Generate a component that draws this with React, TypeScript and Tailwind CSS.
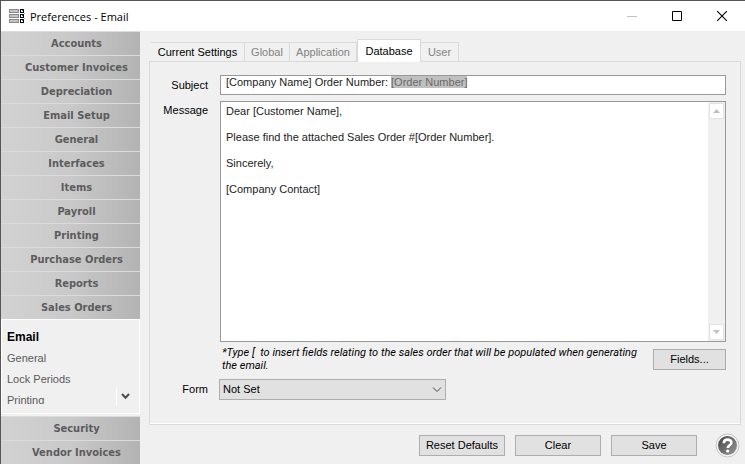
import { useEffect, useRef, useState } from "react";

const TOP_SECTIONS = [
  "Accounts",
  "Customer Invoices",
  "Depreciation",
  "Email Setup",
  "General",
  "Interfaces",
  "Items",
  "Payroll",
  "Printing",
  "Purchase Orders",
  "Reports",
  "Sales Orders",
];
const BOTTOM_SECTIONS = ["Security", "Vendor Invoices"];
const PAGES = ["Email", "General", "Lock Periods", "Printing"];

function SectionButton({ name }: { name: string }) {
  return (
    <button className="h-6 w-full shrink-0 border-t border-[#dcdcdc] bg-linear-to-r from-[#d2d2d2] via-[#c9c9c9] to-[#b3b3b3] pl-3 text-center font-['DejaVu_Sans_Condensed','DejaVu_Sans',sans-serif] text-[11px] leading-[23px] font-bold text-[#5c5c5c]">
      {name}
    </button>
  );
}

function Sidebar() {
  return (
    <nav className="flex w-[139px] shrink-0 flex-col">
      {TOP_SECTIONS.map((name) => (
        <SectionButton key={name} name={name} />
      ))}
      <div className="relative mb-[2px] h-[95px] shrink-0 overflow-hidden border border-white bg-[#f0f0f0] pt-2 pl-[5px]">
        <div className="flex h-[76px] flex-col overflow-hidden">
          {PAGES.map((page) => (
            <a
              key={page}
              href="#"
              className={
                page === "Email"
                  ? "h-[21px] shrink-0 text-[12px] leading-[18px] font-bold text-black"
                  : "h-[21px] shrink-0 leading-[18px] text-[#5a5a5a]"
              }
            >
              {page}
            </a>
          ))}
        </div>
        <button
          aria-label="Scroll down"
          className="absolute right-[5px] bottom-2 flex h-[17px] w-[18px] items-center justify-center border-l border-white"
        >
          <svg width="9" height="7" viewBox="0 0 9 7" fill="none" stroke="#4a4a4a" strokeWidth="2">
            <path d="M1 1l3.5 3.8L8 1" />
          </svg>
        </button>
      </div>
      {BOTTOM_SECTIONS.map((name) => (
        <SectionButton key={name} name={name} />
      ))}
    </nav>
  );
}

function TitleBar() {
  return (
    <header className="flex h-[30px] shrink-0 items-center bg-white pl-2">
      <svg width="16" height="15" viewBox="0 0 16 15">
        {[0, 5, 10].map((y) => (
          <g key={y}>
            <rect x="0.5" y={y + 0.5} width="9" height="3" fill="#c4c4c4" stroke="#8a8a8a" />
            <rect x="11.5" y={y + 0.5} width="3" height="3" fill="#fff" stroke="#000" />
            <path d={`M13 ${y + 2}l2.5 -2.5`} stroke="#333" strokeWidth="0.8" />
          </g>
        ))}
      </svg>
      <h1 className="ml-[5px] flex-1 font-['Open_Sans',sans-serif] text-[11px] text-black">Preferences - Email</h1>
      <button aria-label="Minimize" className="flex h-full w-[46px] items-center justify-center">
        <svg width="10" height="10" stroke="#c4c4c4">
          <path d="M0 5.5h10" />
        </svg>
      </button>
      <button aria-label="Maximize" className="flex h-full w-[44px] items-center justify-center">
        <svg width="10" height="10" stroke="#000" fill="none">
          <path d="M0.5 0.5h9v9h-9z" />
        </svg>
      </button>
      <button aria-label="Close" className="flex h-full w-[46px] items-center justify-center">
        <svg width="10" height="10" stroke="#000" strokeWidth="1.1">
          <path d="M0 0l10 10M10 0L0 10" />
        </svg>
      </button>
    </header>
  );
}

const tabBase = "h-[19px] border-t border-r border-[#d9d9d9] bg-[#f0f0f0]";

function Tabs() {
  return (
    <div role="tablist" className="ml-[2px] flex items-end">
      <button role="tab" className={`${tabBase} w-[94px] text-black`}>Current Settings</button>
      <button role="tab" className={`${tabBase} w-[45px] text-[#838383]`}>Global</button>
      <button role="tab" className={`${tabBase} w-[67px] text-[#838383]`}>Application</button>
      <button role="tab" aria-selected className="relative -mb-px h-[23px] w-[64px] border border-b-0 border-[#d9d9d9] bg-white text-black">
        Database
      </button>
      <button role="tab" className={`${tabBase} w-[38px] text-[#838383]`}>User</button>
    </div>
  );
}

function ScrollArrow({ up }: { up?: boolean }) {
  return (
    <button
      type="button"
      aria-label={up ? "Scroll up" : "Scroll down"}
      className="flex h-4 w-[15px] items-center justify-center border border-[#e3e3e3] bg-white"
    >
      <svg width="7" height="4" viewBox="0 0 7 4" fill="#c0c0c0">
        <path d={up ? "M0 4L3.5 0L7 4z" : "M0 0L3.5 4L7 0z"} />
      </svg>
    </button>
  );
}

const buttonStyle = "h-[21px] border border-[#adadad] bg-[#e1e1e1] text-black";

export default function App() {
  const subjectRef = useRef<HTMLInputElement>(null);
  const [subject, setSubject] = useState("[Company Name] Order Number: [Order Number]");
  const [message, setMessage] = useState(
    "Dear [Customer Name],\n\nPlease find the attached Sales Order #[Order Number].\n\nSincerely,\n\n[Company Contact]"
  );

  // start with the last field selected
  useEffect(() => {
    const input = subjectRef.current;
    input?.focus();
    input?.setSelectionRange(subject.lastIndexOf("["), subject.length);
  }, []);

  return (
    <div className="flex min-h-screen flex-col border-t border-l border-[#555] bg-[#f0f0f0] font-['Liberation_Sans',Arial,sans-serif] text-[11px] leading-[13px]">
      <TitleBar />
      <div className="flex flex-1">
        <Sidebar />
        <main className="flex min-w-0 flex-1 flex-col pt-2 pr-1 pl-[9px]">
          <Tabs />
          <form className="flex flex-1 flex-col border border-[#d9d9d9] pt-[13px] pr-[14px] pb-6 shadow-[inset_0_-1px_0_#fff]">
            <div className="flex">
              <label htmlFor="subject" className="w-[70px] shrink-0 pt-[4px] pr-[12px] text-right">Subject</label>
              <input
                id="subject"
                ref={subjectRef}
                value={subject}
                onChange={(e) => setSubject(e.target.value)}
                className="h-5 min-w-0 flex-1 border border-[#999] bg-white px-[5px] pb-[6px] text-[#1c1c1c] outline-none selection:bg-[#c0c0c0] selection:text-[#6a6a6a]"
              />
            </div>
            <div className="mt-[6px] flex flex-1">
              <label htmlFor="message" className="w-[70px] shrink-0 pt-[3px] pr-[12px] text-right">Message</label>
              <div className="flex min-w-0 flex-1 border border-[#999] bg-white">
                <textarea
                  id="message"
                  value={message}
                  onChange={(e) => setMessage(e.target.value)}
                  className="flex-1 resize-none px-[5px] pt-[3px] text-[#1c1c1c] outline-none"
                />
                <div className="flex w-[17px] flex-col items-center justify-between bg-[#f0f0f0] py-px">
                  <ScrollArrow up />
                  <ScrollArrow />
                </div>
              </div>
            </div>
            <div className="mt-1 flex items-start justify-between pl-[72px]">
              <p className="w-[420px] font-['Roboto',sans-serif] italic">
                *Type [&nbsp; to insert fields relating to the sales order that will be populated when generating the email.
              </p>
              <button type="button" className={`${buttonStyle} mt-[3px] w-[73px]`}>Fields...</button>
            </div>
            <div className="mt-[7px] flex items-center">
              <label htmlFor="form" className="w-[69px] pr-[11px] text-right">Form</label>
              <div className="relative">
                <select id="form" className={`${buttonStyle} w-[227px] appearance-none pl-[3px]`}>
                  <option>Not Set</option>
                </select>
                <svg className="pointer-events-none absolute top-2 right-1" width="10" height="6" fill="none" stroke="#444">
                  <path d="M1 0.5l4 4l4 -4" />
                </svg>
              </div>
            </div>
          </form>
          <footer className="flex h-[39px] shrink-0 items-center justify-end gap-[10px] pt-[2px] pr-px">
            <button className={`${buttonStyle} w-[86px]`}>Reset Defaults</button>
            <button className={`${buttonStyle} w-[86px]`}>Clear</button>
            <button className={`${buttonStyle} w-[86px]`}>Save</button>
            <button aria-label="Help" className="ml-2">
              <svg width="25" height="25" viewBox="0 0 25 25">
                <defs>
                  <linearGradient id="help" x1="0" y1="0" x2="1" y2="1">
                    <stop offset="0" stopColor="#444" />
                    <stop offset="1" stopColor="#999" />
                  </linearGradient>
                </defs>
                <circle cx="12.5" cy="12.5" r="11.5" fill="#f4f4f4" stroke="#c4c4c4" />
                <circle cx="12.5" cy="12.5" r="9.5" fill="url(#help)" />
                <path d="M8.8 10.2c0-4.8 7.6-4.6 7.6-.5 0 2.6-3.6 2.6-3.6 5.4" fill="none" stroke="#fff" strokeWidth="2.6" />
                <circle cx="12.7" cy="18" r="1.6" fill="#fff" />
              </svg>
            </button>
          </footer>
        </main>
      </div>
    </div>
  );
}
